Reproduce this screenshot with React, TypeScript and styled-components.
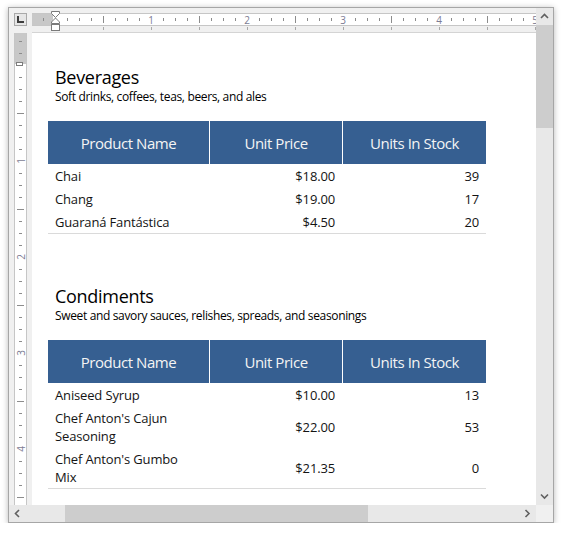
import React from "react";
import styled, { createGlobalStyle } from "styled-components";

const FONT = `"Open Sans", "Noto Sans", sans-serif`;

const GlobalStyle = createGlobalStyle`
  html, body { margin: 0; padding: 0; background: #ffffff; }
  body { font-family: ${FONT}; }
`;

const Stage = styled.div`
  padding: 7px 0 0 8px;
`;

const Window = styled.div`
  box-sizing: border-box;
  width: 546px;
  height: 516px;
  border: 1px solid #a6a6a6;
  box-shadow: 0 1px 6px rgba(0, 0, 0, 0.28);
  background: #f0f0f0;
  display: grid;
  grid-template-columns: 527px 17px;
  grid-template-rows: 497px 17px;
  overflow: hidden;
`;

const Main = styled.div`
  display: grid;
  grid-template-columns: 23px 504px;
  grid-template-rows: 25px 472px;
  overflow: hidden;
`;

const CornerCell = styled.div`
  padding: 5px 0 0 5px;
`;

const TabSelector = styled.div`
  box-sizing: border-box;
  width: 13px;
  height: 13px;
  border: 1px solid #a9a9a9;
  background: #e6e6e6;
  display: flex;
  align-items: center;
  justify-content: center;
`;

const TopRulerArea = styled.div`
  padding-top: 5px;
  display: flex;
  flex-direction: column;
`;

const HRuler = styled.div`
  position: relative;
  box-sizing: border-box;
  height: 13px;
  border-top: 1px solid #c6c6c6;
  border-bottom: 1px solid #c6c6c6;
  background: linear-gradient(to right, #c8c8c8 0 21px, #ffffff 21px);
  display: flex;
  padding-left: 5px;
`;

const HTickCell = styled.div`
  flex: 0 0 12px;
  width: 12px;
  display: flex;
  align-items: center;
  justify-content: center;
`;

const HMark = styled.div<{ $tall?: boolean }>`
  width: 1px;
  height: ${(p) => (p.$tall ? 7 : 3)}px;
  background: #8c8c8c;
`;

const RulerNum = styled.span`
  font-size: 10px;
  line-height: 10px;
  color: #7c7c94;
`;

const Hourglass = styled.svg`
  position: absolute;
  left: 19px;
  top: -3px;
`;

const TabStrip = styled.div`
  box-sizing: border-box;
  height: 7px;
  border-bottom: 1px solid #d4d4d4;
  display: flex;
  padding-left: 47px;
`;

const TabStop = styled.div`
  flex: 0 0 48px;
  display: flex;
  justify-content: center;
  padding-top: 1px;
  &::before {
    content: "";
    width: 1px;
    height: 3px;
    background: #a8a8a8;
  }
`;

const LeftRulerArea = styled.div`
  padding-left: 5px;
  display: flex;
  overflow: hidden;
`;

const VRuler = styled.div`
  position: relative;
  box-sizing: border-box;
  width: 13px;
  border-left: 1px solid #c6c6c6;
  border-right: 1px solid #c6c6c6;
  background: linear-gradient(to bottom, #c8c8c8 0 31px, #ffffff 31px);
  display: flex;
  flex-direction: column;
  padding-top: 2px;
`;

const VTickCell = styled.div`
  flex: 0 0 12px;
  height: 12px;
  display: flex;
  align-items: center;
  justify-content: center;
`;

const VMark = styled.div<{ $tall?: boolean }>`
  height: 1px;
  width: ${(p) => (p.$tall ? 7 : 3)}px;
  background: #8c8c8c;
`;

const VNum = styled(RulerNum)`
  transform: rotate(-90deg);
`;

const MarginMarker = styled.div`
  position: absolute;
  left: 1px;
  top: 29px;
  box-sizing: border-box;
  width: 7px;
  height: 4px;
  border: 1px solid #7c7c7c;
  background: #ffffff;
`;

const Page = styled.div`
  background: #ffffff;
  padding-left: 16px;
  overflow: hidden;
`;

const Section = styled.section<{ $gap: number }>`
  margin-top: ${(p) => p.$gap}px;
`;

const Title = styled.h2`
  margin: 0 0 0 7px;
  font-size: 18px;
  letter-spacing: -0.3px;
  font-weight: 400;
  line-height: 22px;
  color: #000000;
`;

const Subtitle = styled.p`
  margin: 1px 0 16px 7px;
  font-size: 12px;
  letter-spacing: -0.35px;
  line-height: 16px;
  color: #000000;
`;

const Table = styled.div`
  display: grid;
  grid-template-columns: 161px 133px 144px;
  width: 438px;
`;

const HeadCell = styled.div<{ $divider?: boolean }>`
  box-sizing: border-box;
  height: 43px;
  background: #365f91;
  color: #f4f4f4;
  font-size: 15px;
  letter-spacing: -0.45px;
  display: flex;
  align-items: center;
  justify-content: center;
  border-left: ${(p) => (p.$divider ? "1px solid #ffffff" : "none")};
`;

const Cell = styled.div<{ $right?: boolean; $last?: boolean }>`
  padding: 3px ${(p) => (p.$right ? 7 : 20)}px 2px 7px;
  font-size: 13px;
  letter-spacing: -0.15px;
  line-height: 18px;
  color: #141414;
  display: flex;
  align-items: center;
  justify-content: ${(p) => (p.$right ? "flex-end" : "flex-start")};
  text-align: ${(p) => (p.$right ? "right" : "left")};
  border-bottom: ${(p) => (p.$last ? "1px solid #dadada" : "none")};
`;

const VScroll = styled.div`
  display: flex;
  flex-direction: column;
  background: #e8e8e8;
`;

const HScroll = styled.div`
  display: flex;
  background: #e8e8e8;
`;

const ScrollButton = styled.div`
  flex: 0 0 17px;
  width: 17px;
  height: 17px;
  display: flex;
  align-items: center;
  justify-content: center;
`;

const VTrack = styled.div`
  flex: 1;
`;

const VThumb = styled.div`
  height: 103px;
  background: #cdcdcd;
`;

const HTrack = styled.div`
  flex: 1;
  padding-left: 39px;
`;

const HThumb = styled.div`
  width: 303px;
  height: 17px;
  background: #cdcdcd;
`;

const ScrollCorner = styled.div`
  background: #f0f0f0;
`;

type Row = { name: string; price: string; stock: string };

const sections: { title: string; sub: string; gap: number; rows: Row[] }[] = [
  {
    title: "Beverages",
    sub: "Soft drinks, coffees, teas, beers, and ales",
    gap: 33,
    rows: [
      { name: "Chai", price: "$18.00", stock: "39" },
      { name: "Chang", price: "$19.00", stock: "17" },
      { name: "Guaraná Fantástica", price: "$4.50", stock: "20" },
    ],
  },
  {
    title: "Condiments",
    sub: "Sweet and savory sauces, relishes, spreads, and seasonings",
    gap: 51,
    rows: [
      { name: "Aniseed Syrup", price: "$10.00", stock: "13" },
      { name: "Chef Anton's Cajun Seasoning", price: "$22.00", stock: "53" },
      { name: "Chef Anton's Gumbo Mix", price: "$21.35", stock: "0" },
    ],
  },
];

const Chevron = ({ dir }: { dir: "up" | "down" | "left" | "right" }) => {
  const pts: Record<string, string> = {
    up: "1,5 4.5,1.5 8,5",
    down: "1,1.5 4.5,5 8,1.5",
    left: "5,1 1.5,4.5 5,8",
    right: "1.5,1 5,4.5 1.5,8",
  };
  const vertical = dir === "up" || dir === "down";
  return (
    <svg width={vertical ? 9 : 7} height={vertical ? 7 : 9} viewBox={vertical ? "0 0 9 7" : "0 0 7 9"}>
      <polyline points={pts[dir]} fill="none" stroke="#606060" strokeWidth="1.6" />
    </svg>
  );
};

const hTicks = Array.from({ length: 42 }, (_, i) => i - 1);
const vTicks = Array.from({ length: 40 }, (_, i) => i - 2);

export default function App() {
  return (
    <>
      <GlobalStyle />
      <Stage>
        <Window>
          <Main>
            <CornerCell>
              <TabSelector>
                <svg width="9" height="9" viewBox="0 0 9 9">
                  <rect x="1" y="1" width="2" height="7" fill="#3c3c3c" />
                  <rect x="1" y="6" width="7" height="2" fill="#3c3c3c" />
                </svg>
              </TabSelector>
            </CornerCell>
            <TopRulerArea>
              <HRuler>
                {hTicks.map((k) => (
                  <HTickCell key={k}>
                    {k === 0 ? null : k % 8 === 0 ? (
                      <RulerNum>{k / 8}</RulerNum>
                    ) : (
                      <HMark $tall={k % 4 === 0} />
                    )}
                  </HTickCell>
                ))}
                <Hourglass width="10" height="20" viewBox="0 0 10 20">
                  <path d="M0.5 0.5 H8.5 V2.5 L4.5 6.5 L0.5 2.5 Z" fill="#ffffff" stroke="#7a7a7a" />
                  <path d="M4.5 7 L8.5 11 V12.5 H0.5 V11 Z" fill="#ffffff" stroke="#7a7a7a" />
                  <rect x="0.5" y="13.5" width="8" height="6" fill="#ffffff" stroke="#7a7a7a" />
                </Hourglass>
              </HRuler>
              <TabStrip>
                {Array.from({ length: 10 }, (_, i) => (
                  <TabStop key={i} />
                ))}
              </TabStrip>
            </TopRulerArea>
            <LeftRulerArea>
              <VRuler>
                {vTicks.map((k) => (
                  <VTickCell key={k}>
                    {k === 0 ? null : k % 8 === 0 ? (
                      <VNum>{k / 8}</VNum>
                    ) : (
                      <VMark $tall={k % 4 === 0} />
                    )}
                  </VTickCell>
                ))}
                <MarginMarker />
              </VRuler>
            </LeftRulerArea>
            <Page>
              {sections.map((s) => (
                <Section key={s.title} $gap={s.gap}>
                  <Title>{s.title}</Title>
                  <Subtitle>{s.sub}</Subtitle>
                  <Table>
                    <HeadCell>Product Name</HeadCell>
                    <HeadCell $divider>Unit Price</HeadCell>
                    <HeadCell $divider>Units In Stock</HeadCell>
                    {s.rows.map((r, i) => {
                      const last = i === s.rows.length - 1;
                      return (
                        <React.Fragment key={r.name}>
                          <Cell $last={last}>{r.name}</Cell>
                          <Cell $right $last={last}>{r.price}</Cell>
                          <Cell $right $last={last}>{r.stock}</Cell>
                        </React.Fragment>
                      );
                    })}
                  </Table>
                </Section>
              ))}
            </Page>
          </Main>
          <VScroll>
            <ScrollButton>
              <Chevron dir="up" />
            </ScrollButton>
            <VTrack>
              <VThumb />
            </VTrack>
            <ScrollButton>
              <Chevron dir="down" />
            </ScrollButton>
          </VScroll>
          <HScroll>
            <ScrollButton>
              <Chevron dir="left" />
            </ScrollButton>
            <HTrack>
              <HThumb />
            </HTrack>
            <ScrollButton>
              <Chevron dir="right" />
            </ScrollButton>
          </HScroll>
          <ScrollCorner />
        </Window>
      </Stage>
    </>
  );
}
